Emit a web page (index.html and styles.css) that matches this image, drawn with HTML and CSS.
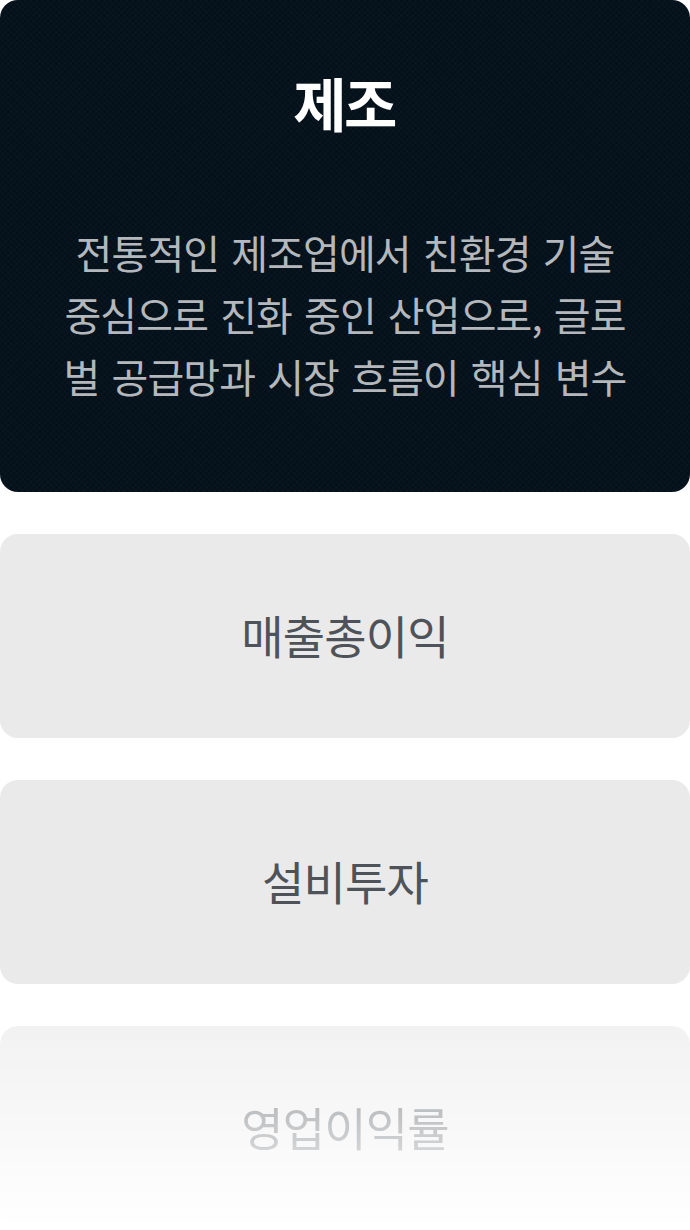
FILE: index.html
```html
<!DOCTYPE html>
<html>
    <head>
        <title>제조</title>
        <link rel="stylesheet" href="styles.css">
    </head>
    <body>
        <div id="list">
            <div class="card card-main">
                <h2 class="title">제조</h2>
                <p class="desc">전통적인 제조업에서 친환경 기술<br>중심으로 진화 중인 산업으로, 글로<br>벌 공급망과 시장 흐름이 핵심 변수</p>
            </div>
            <div class="card card-item">매출총이익</div>
            <div class="card card-item">설비투자</div>
            <div class="card card-item card-fade">영업이익률</div>
        </div>
    </body>
</html>
```

FILE: styles.css
```css
*{
    margin: 0;
    box-sizing: border-box;
}
html{
    background-color: white;
}
body{
    font-family: "Noto Sans CJK KR", sans-serif;
    overflow: hidden;
}
#list{
    display: flex;
    flex-direction: column;
    gap: 42px;
    height: 1230px;
}
.card{
    border-radius: 18px;
    text-align: center;
}
.card-main{
    height: 492px;
    padding-top: 64px;
    color: white;
    background-color: #03101a;
    background-image:
        repeating-linear-gradient(45deg, rgba(255,255,255,0.01) 0 2px, transparent 2px 4px),
        repeating-linear-gradient(-45deg, rgba(255,255,255,0.01) 0 2px, transparent 2px 4px);
}
.title{
    padding-right: 2px;
    font-size: 58px;
    font-weight: 700;
    line-height: 76px;
    letter-spacing: -2.5px;
}
.desc{
    margin-top: 81px;
    font-size: 40px;
    line-height: 62px;
    letter-spacing: -0.9px;
    word-spacing: 4px;
    color: #b4b8bc;
}
.card-item{
    height: 204px;
    display: flex;
    align-items: center;
    justify-content: center;
    padding-bottom: 4px;
    font-size: 46px;
    letter-spacing: -0.8px;
    color: #4e5359;
    background-color: #eaeaea;
}
.card-fade{
    mask-image: linear-gradient(rgba(0,0,0,0.64), transparent);
}
```
